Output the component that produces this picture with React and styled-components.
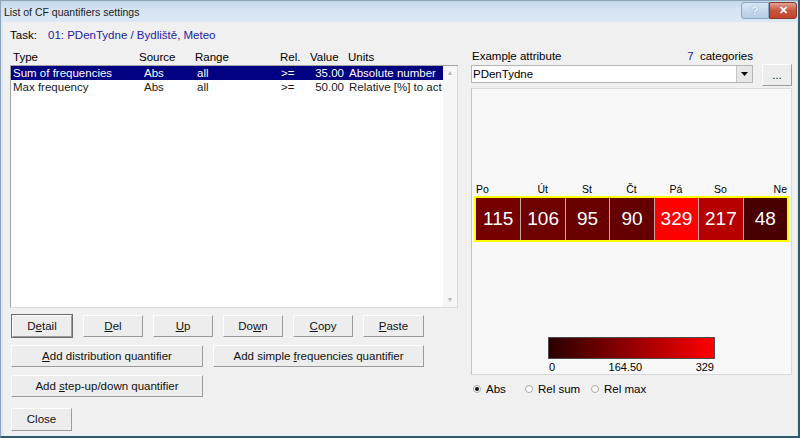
import styled, { createGlobalStyle } from "styled-components";

const rows = [
  { type: "Sum of frequencies", source: "Abs", range: "all", rel: ">=", value: "35.00", units: "Absolute number", selected: true },
  { type: "Max frequency", source: "Abs", range: "all", rel: ">=", value: "50.00", units: "Relative [%] to act" },
];

const days = [
  { label: "Po", value: 115 },
  { label: "Út", value: 106 },
  { label: "St", value: 95 },
  { label: "Čt", value: 90 },
  { label: "Pá", value: 329 },
  { label: "So", value: 217 },
  { label: "Ne", value: 48 },
];

const MAX = 329;

// dark maroon -> pure red, same ramp as the legend bar
const heat = (v) => {
  const r = Math.round(42 + (255 - 42) * (v / MAX));
  return `rgb(${r}, 0, 0)`;
};

const App = () => {
  return (
    <>
      <GlobalStyle />
      <Window>
        <TitleBar>
          <TitleText>List of CF quantifiers settings</TitleText>
          <Caption>
            <HelpBtn>?</HelpBtn>
            <CloseBtn>✕</CloseBtn>
          </Caption>
        </TitleBar>

        <Body>
          <TaskRow>
            <TaskLabel>Task:</TaskLabel>
            <BlueText>01: PDenTydne / Bydliště, Meteo</BlueText>
          </TaskRow>

          <Columns>
            {/* LEFT */}
            <LeftCol>
              <HeaderRow>
                <Cell>Type</Cell>
                <Cell>Source</Cell>
                <Cell>Range</Cell>
                <Cell>Rel.</Cell>
                <Cell>Value</Cell>
                <Cell $pad={4}>Units</Cell>
              </HeaderRow>

              <ListBox>
                <ListRows>
                  {rows.map((r) => (
                    <ListRow key={r.type} $selected={r.selected}>
                      <Cell>{r.type}</Cell>
                      <Cell $pad={5}>{r.source}</Cell>
                      <Cell $pad={2}>{r.range}</Cell>
                      <Cell $pad={1}>{r.rel}</Cell>
                      <Cell $align="right">{r.value}</Cell>
                      <Cell $pad={5}>{r.units}</Cell>
                    </ListRow>
                  ))}
                </ListRows>
                <ScrollBar>
                  <ScrollArrow>▲</ScrollArrow>
                  <ScrollArrow>▼</ScrollArrow>
                </ScrollBar>
              </ListBox>

              <ButtonRow $top={7}>
                <Button $w={62} $default>
                  D<u>e</u>tail
                </Button>
                <Button $w={60}>
                  <u>D</u>el
                </Button>
                <Button $w={60}>
                  <u>U</u>p
                </Button>
                <Button $w={60}>
                  Do<u>w</u>n
                </Button>
                <Button $w={60}>
                  <u>C</u>opy
                </Button>
                <Button $w={61}>
                  <u>P</u>aste
                </Button>
              </ButtonRow>
              <ButtonRow $top={8}>
                <Button $w={192}>
                  <u>A</u>dd distribution quantifier
                </Button>
                <Button $w={211}>
                  Add simple <u>f</u>requencies quantifier
                </Button>
              </ButtonRow>
              <ButtonRow $top={8}>
                <Button $w={192}>
                  Add <u>s</u>tep-up/down quantifier
                </Button>
              </ButtonRow>
              <ButtonRow $top={11}>
                <Button $w={61} $h={23}>
                  Close
                </Button>
              </ButtonRow>
            </LeftCol>

            {/* RIGHT */}
            <RightCol>
              <LabelRow>
                <span>
                  Examp<u>l</u>e attribute
                </span>
                <span>
                  <BlueText>7</BlueText>&nbsp; categories
                </span>
              </LabelRow>

              <ComboRow>
                <Combo>
                  <ComboText>PDenTydne</ComboText>
                  <ComboArrow>
                    <svg width="7" height="4" viewBox="0 0 7 4">
                      <path d="M0 0h7L3.5 4z" fill="#000" />
                    </svg>
                  </ComboArrow>
                </Combo>
                <Button $w={30} $h={22}>
                  ...
                </Button>
              </ComboRow>

              <ChartPanel>
                <DayLabels>
                  {days.map((d, i) => (
                    <DayLabel key={d.label} $pos={i === 0 ? "left" : i === days.length - 1 ? "right" : "center"}>
                      {d.label}
                    </DayLabel>
                  ))}
                </DayLabels>
                <HeatStrip>
                  {days.map((d) => (
                    <HeatCell key={d.label} style={{ background: heat(d.value) }}>
                      {d.value}
                    </HeatCell>
                  ))}
                </HeatStrip>

                <Legend>
                  <LegendBar />
                  <LegendScale>
                    <span>0</span>
                    <span>164.50</span>
                    <span>329</span>
                  </LegendScale>
                </Legend>
              </ChartPanel>

              <RadioRow>
                <RadioItem $w={52}>
                  <RadioDot $checked />
                  Abs
                </RadioItem>
                <RadioItem $w={66}>
                  <RadioDot />
                  Rel sum
                </RadioItem>
                <RadioItem>
                  <RadioDot />
                  Rel max
                </RadioItem>
              </RadioRow>
            </RightCol>
          </Columns>
        </Body>
      </Window>
    </>
  );
};

//STYLED COMPONENTS

const GlobalStyle = createGlobalStyle`
  * {
    box-sizing: border-box;
  }

  html,
  body {
    margin: 0;
    padding: 0;
    background: #f0f0f0;
  }

  body {
    font-family: "Liberation Sans", Arial, sans-serif;
    font-size: 11px;
    color: #000;
  }
`;

const Window = styled.div`
  width: 800px;
  height: 438px;

  display: flex;
  flex-direction: column;

  background: #dde8f4;

  border-left: 1px solid #8ea3b9;
  border-right: 2px solid #2d5c6e;
  border-bottom: 2px solid #2d5c6e;

  overflow: hidden;
`;

const TitleBar = styled.div`
  height: 22px;

  display: flex;
  align-items: center;
  justify-content: space-between;

  background: linear-gradient(to bottom, #c3d7ec, #d6e4f3 40%, #dce8f5);
  border-top: 1px solid #8ea3b9;

  padding: 0 1px 0 3px;
`;

const TitleText = styled.span`
  font-size: 10.5px;
  color: #1b1b1b;
`;

const Caption = styled.div`
  display: flex;
  align-self: flex-start;
  margin-top: 1px;
`;

const HelpBtn = styled.div`
  width: 28px;
  height: 17px;

  display: flex;
  align-items: center;
  justify-content: center;

  background: linear-gradient(to bottom, #d7e5f3, #b5cce5);
  border: 1px solid #8fa7c1;
  border-radius: 3px 0 0 3px;

  color: #f4f8fc;
  font-size: 12px;
  font-weight: bold;
  text-shadow: 0 0 1px #5a7290;
`;

const CloseBtn = styled.div`
  width: 28px;
  height: 17px;

  display: flex;
  align-items: center;
  justify-content: center;

  background: linear-gradient(to bottom, #e3a08f, #c9553f 50%, #c4432c);
  border: 1px solid #8a3a2c;
  border-radius: 0 3px 3px 0;

  color: #fff;
  font-size: 11px;
  font-weight: bold;
`;

const Body = styled.div`
  flex: 1;

  display: flex;
  flex-direction: column;

  background: #f0f0f0;

  margin: 0 1px 0 2px;
  padding: 0 5px 0 7px;
`;

const TaskRow = styled.div`
  height: 26px;

  display: flex;
  align-items: center;

  font-size: 11.5px;
`;

const TaskLabel = styled.span`
  width: 38px;
`;

const BlueText = styled.span`
  color: #1c1ca8;
`;

const Columns = styled.div`
  display: flex;
  gap: 13px;
`;

const LeftCol = styled.div`
  width: 448px;

  display: flex;
  flex-direction: column;
`;

const gridCols = "126px 56px 85px 30px 34px 1fr";

const HeaderRow = styled.div`
  height: 17px;

  display: grid;
  grid-template-columns: ${gridCols};
  align-items: center;

  margin-left: 1px;
  padding-left: 2px;

  font-size: 11.5px;
`;

const Cell = styled.span`
  padding-left: ${({ $pad }) => $pad || 0}px;
  text-align: ${({ $align }) => $align || "left"};

  white-space: nowrap;
  overflow: hidden;
`;

const ListBox = styled.div`
  height: 243px;

  display: flex;

  background: #fff;
  border: 1px solid #a3a3a3;
  border-right-color: #dadada;
  border-bottom-color: #dadada;
`;

const ListRows = styled.div`
  flex: 1;
  min-width: 0;
`;

const ListRow = styled.div`
  height: 14px;

  display: grid;
  grid-template-columns: ${gridCols};
  align-items: center;

  padding-left: 2px;

  background: ${({ $selected }) => ($selected ? "#000080" : "transparent")};
  color: ${({ $selected }) => ($selected ? "#fff" : "#1a1a1a")};

  font-size: 11.5px;
  line-height: 14px;
`;

const ScrollBar = styled.div`
  width: 14px;

  display: flex;
  flex-direction: column;
  justify-content: space-between;

  background: #f6f6f6;

  padding: 3px 0 4px;
`;

const ScrollArrow = styled.span`
  text-align: center;

  color: #b9b9b9;
  font-size: 7px;
`;

const ButtonRow = styled.div`
  display: flex;
  gap: 10px;

  margin-top: ${({ $top }) => $top}px;
  margin-left: 1px;
`;

const Button = styled.div`
  width: ${({ $w }) => $w}px;
  height: ${({ $h }) => $h || 22}px;

  display: block;
  text-align: center;
  line-height: ${({ $h }) => ($h || 22) - 2}px;

  background: #ededed;
  border: 1px solid;
  border-color: #fdfdfd #9b9b9b #9b9b9b #fdfdfd;
  box-shadow: ${({ $default }) => ($default ? "0 0 0 1px #6d6d6d" : "none")};

  color: #111;
  font-size: 11.5px;
  white-space: nowrap;

  ${({ $default }) => $default && "margin: 0 1px; width: 60px;"}

  u {
    text-underline-offset: 1px;
  }
`;

const RightCol = styled.div`
  width: 321px;

  display: flex;
  flex-direction: column;
`;

const LabelRow = styled.div`
  height: 16px;

  display: flex;
  justify-content: space-between;
  align-items: center;

  padding: 0 39px 0 1px;

  font-size: 11.5px;
`;

const ComboRow = styled.div`
  height: 22px;

  display: flex;
  justify-content: space-between;
  align-items: flex-start;
`;

const Combo = styled.div`
  width: 282px;
  height: 18px;

  display: flex;
  margin-top: 1px;

  background: #fff;
  border: 1px solid #b5b5b5;

  font-size: 11.5px;
`;

const ComboText = styled.span`
  flex: 1;

  padding-left: 1px;
  line-height: 16px;
`;

const ComboArrow = styled.div`
  width: 16px;

  display: flex;
  align-items: center;
  justify-content: center;

  background: #e6e6e6;
  border-left: 1px solid #c6c6c6;
`;

const ChartPanel = styled.div`
  height: 287px;

  display: flex;
  flex-direction: column;

  margin-top: 2px;
  padding: 94px 2px 0;

  background: #f8f8f8;
  border: 1px solid #d9d9d9;
  border-left-color: #c4c4c4;
`;

const DayLabels = styled.div`
  height: 13px;

  display: grid;
  grid-template-columns: repeat(7, 1fr);

  padding: 0 2px;

  font-size: 10.5px;
  line-height: 12px;
`;

const DayLabel = styled.span`
  text-align: ${({ $pos }) => $pos};
`;

const HeatStrip = styled.div`
  height: 46px;

  display: grid;
  grid-template-columns: repeat(7, 1fr);

  border: 2px solid #ffff00;
`;

const HeatCell = styled.div`
  display: flex;
  align-items: center;
  justify-content: center;

  color: #fff;
  font-size: 19px;

  & + & {
    border-left: 1px solid #c9a3a3;
  }
`;

const Legend = styled.div`
  width: 167px;

  display: flex;
  flex-direction: column;

  align-self: center;
  margin-top: 95px;
`;

const LegendBar = styled.div`
  height: 22px;

  background: linear-gradient(to right, #2a0000, #ff0000);
  border: 1px solid #4a4a4a;
`;

const LegendScale = styled.div`
  display: flex;
  justify-content: space-between;

  padding: 2px 1px 0;

  font-size: 11px;
`;

const RadioRow = styled.div`
  height: 28px;

  display: flex;
  align-items: center;

  padding-left: 2px;

  font-size: 11.5px;
`;

const RadioItem = styled.label`
  width: ${({ $w }) => ($w ? `${$w}px` : "auto")};

  display: flex;
  align-items: center;
  gap: 5px;
`;

const RadioDot = styled.span`
  width: 8px;
  height: 8px;

  position: relative;

  background: #fff;
  border: 1px solid #a8a8a8;
  border-radius: 50%;

  &::after {
    content: "";

    position: absolute;
    inset: 1px;

    background: #111;
    border-radius: 50%;

    display: ${({ $checked }) => ($checked ? "block" : "none")};
  }
`;

export default App;
